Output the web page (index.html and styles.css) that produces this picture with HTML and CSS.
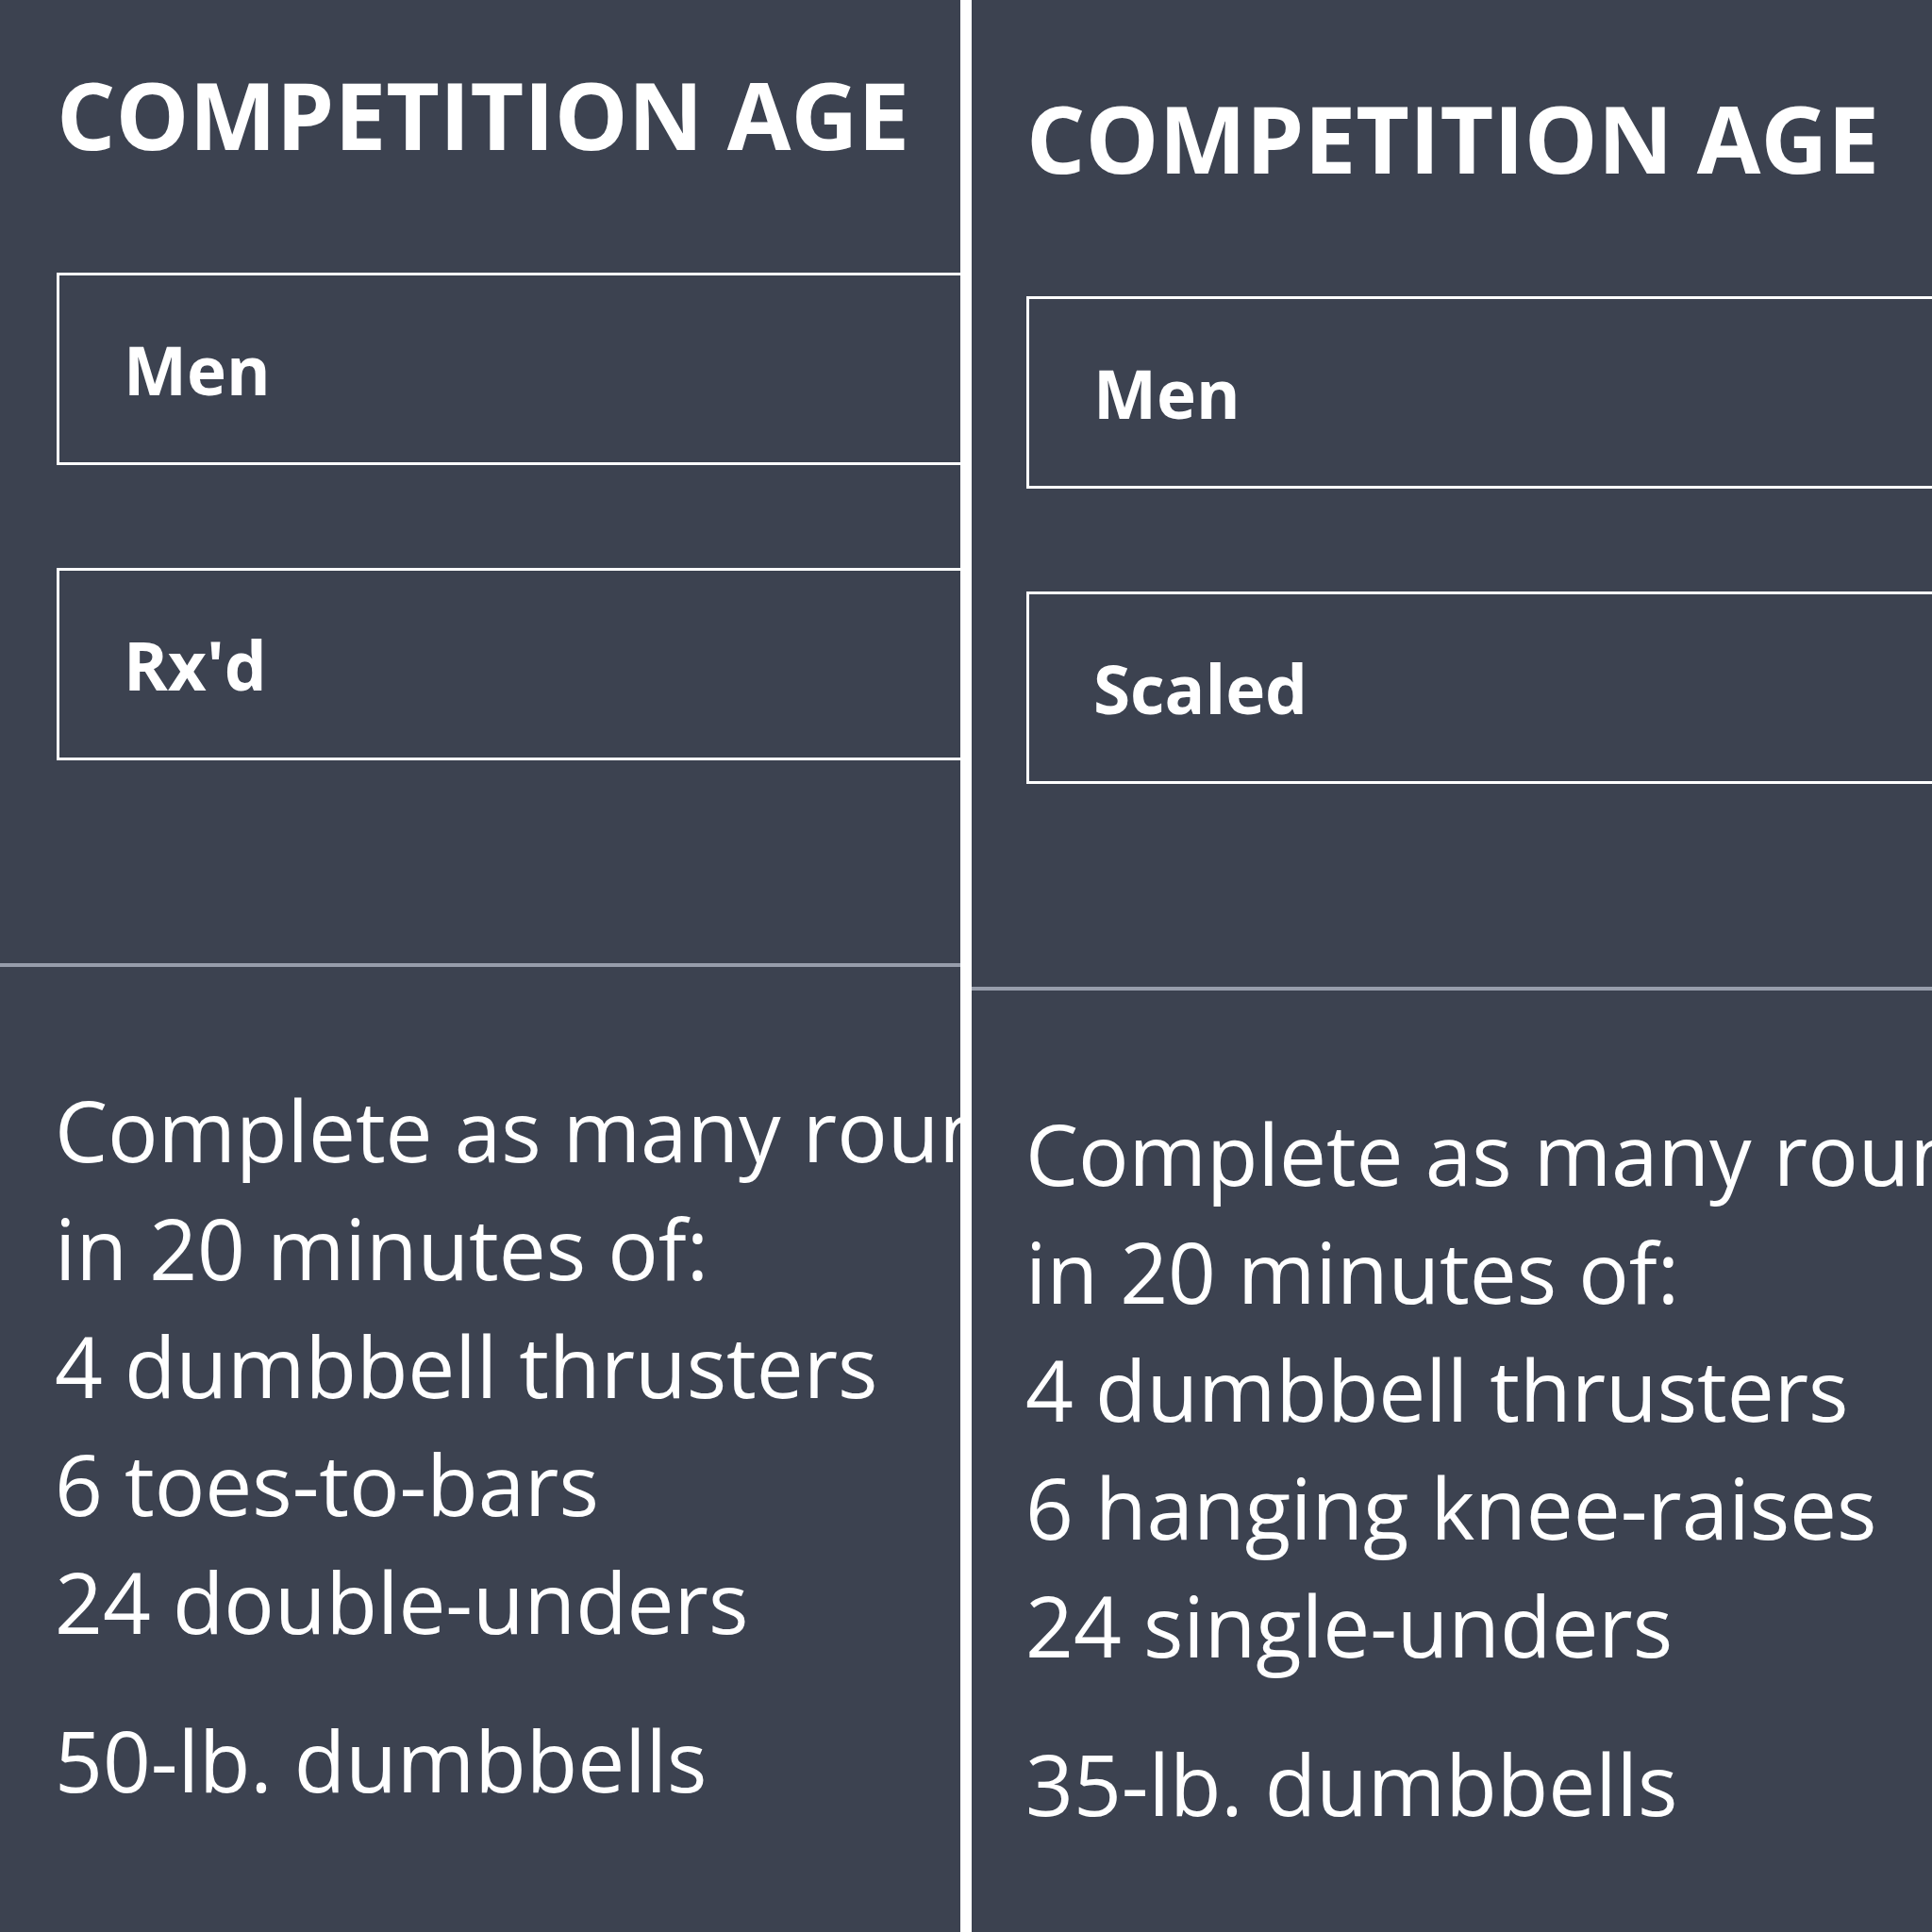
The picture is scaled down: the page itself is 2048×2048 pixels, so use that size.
FILE: index.html
```html
<!DOCTYPE html>
<html lang="en">
<head>
<meta charset="utf-8">
<title>Competition Age</title>
<link rel="stylesheet" href="styles.css">
</head>
<body>
<main class="compare">
  <section class="panel">
    <div class="panel-head">
      <h2 class="title">COMPETITION AGE</h2>
      <div class="select">Men</div>
      <div class="select">Rx'd</div>
    </div>
    <hr class="divider">
    <div class="workout">
      <p class="workout-desc">Complete as many rounds as possible<br>in 20 minutes of:<br>4 dumbbell thrusters<br>6 toes-to-bars<br>24 double-unders</p>
      <p class="workout-weight">50-lb. dumbbells</p>
    </div>
  </section>
  <section class="panel panel--scaled">
    <div class="panel-head">
      <h2 class="title">COMPETITION AGE</h2>
      <div class="select">Men</div>
      <div class="select">Scaled</div>
    </div>
    <hr class="divider">
    <div class="workout">
      <p class="workout-desc">Complete as many rounds as possible<br>in 20 minutes of:<br>4 dumbbell thrusters<br>6 hanging knee-raises<br>24 single-unders</p>
      <p class="workout-weight">35-lb. dumbbells</p>
    </div>
  </section>
</main>
</body>
</html>
```
FILE: styles.css
```css
html, body {
  margin: 0;
  padding: 0;
  background: #ffffff;
}

.compare {
  display: grid;
  grid-template-columns: 1018px 1018px;
  column-gap: 12px;
  height: 2048px;
}

.panel {
  background: #3c4250;
  color: #ffffff;
  overflow: hidden;
  font-family: "Open Sans", "Noto Sans", "Liberation Sans", sans-serif;
}

.panel-head {
  padding: 72px 0 0 60px;
}

.title {
  margin: 0;
  font-size: 98px;
  font-weight: 700;
  line-height: 1;
  white-space: nowrap;
}

.select {
  box-sizing: border-box;
  height: 204px;
  margin-right: -120px;
  border: 3px solid #ffffff;
  display: flex;
  align-items: center;
  padding-left: 68px;
  font-size: 71px;
  font-weight: 700;
  line-height: 1;
}

.title + .select {
  margin-top: 119px;
}

.select + .select {
  margin-top: 109px;
}

.divider {
  border: 0;
  height: 4px;
  margin: 215px 0 0;
  background: #979dab;
}

.workout {
  padding: 0 0 0 58px;
  margin-top: 110px;
}

.workout-desc,
.workout-weight {
  margin: 0;
  font-size: 89px;
  line-height: 125px;
  font-weight: 400;
  white-space: nowrap;
}

.workout-weight {
  margin-top: 43px;
}

.panel--scaled .panel-head {
  padding-top: 97px;
  padding-left: 58px;
}

.panel--scaled .workout {
  padding-left: 57px;
}
```
